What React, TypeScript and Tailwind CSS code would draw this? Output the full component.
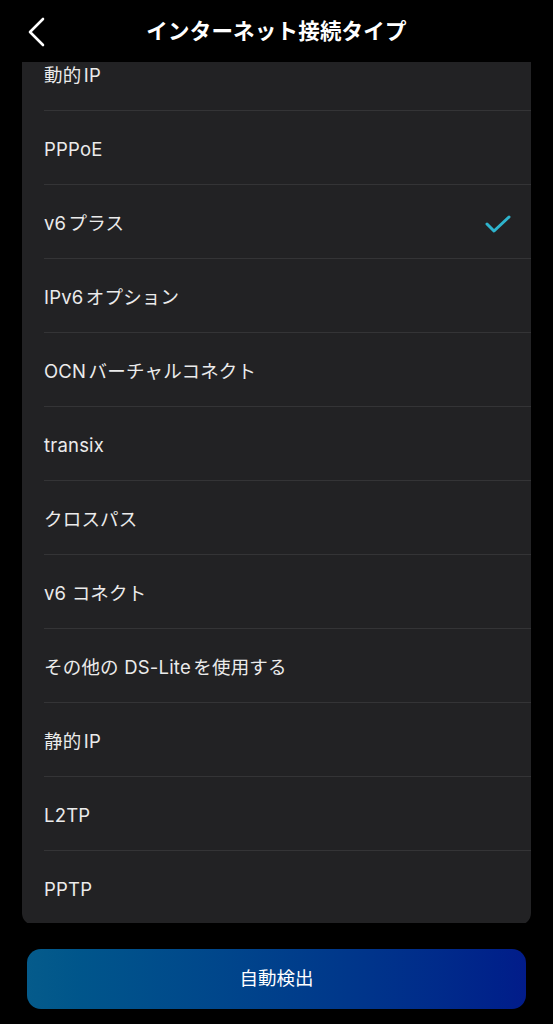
import React from "react";

const items = [
  "動的IP",
  "PPPoE",
  "v6プラス",
  "IPv6オプション",
  "OCNバーチャルコネクト",
  "transix",
  "クロスパス",
  "v6 コネクト",
  "その他の DS-Liteを使用する",
  "静的IP",
  "L2TP",
  "PPTP",
];

const font = { fontFamily: 'Inter, "Noto Sans CJK JP", sans-serif' };

export default function App() {
  return (
    <div className="w-[553px] h-[1024px] bg-black text-white overflow-hidden flex flex-col [text-autospace:normal]" style={font}>
      <div className="h-[62px] shrink-0 relative flex items-center justify-center z-10 bg-black">
        <svg className="absolute left-[27px] top-[17px]" width="20" height="30" viewBox="0 0 20 30" fill="none">
          <path d="M16 2 L3 15 L16 28" stroke="white" strokeWidth="2.6" strokeLinecap="round" strokeLinejoin="round" />
        </svg>
        <h1 className="text-[21.5px] font-bold tracking-[0.2px] text-white">インターネット接続タイプ</h1>
      </div>
      <div className="h-[861px] shrink-0 overflow-hidden px-[22px]">
        <div className="-mt-[25px] bg-[#222224] rounded-[12px] overflow-hidden">
          {items.map((t, i) => (
            <div key={t} className="h-[74px] relative">
              <div className="h-full ml-[22px] pt-[3px] flex items-center justify-between pr-[20px] text-[18.5px] tracking-[0.2px] text-[#ebebeb]">
                <span>{t}</span>
                {t === "v6プラス" && (
                  <svg width="26" height="20" viewBox="0 0 26 20" fill="none">
                    <path d="M2 10 L9 17 L24 3" stroke="#2eb4cd" strokeWidth="3" strokeLinecap="round" strokeLinejoin="round" />
                  </svg>
                )}
              </div>
              {i < items.length - 1 && (
                <div className="absolute bottom-0 left-[22px] right-0 h-px bg-[#343436]" />
              )}
            </div>
          ))}
        </div>
      </div>
      <div className="px-[27px] pt-[26px]">
        <button className="w-full h-[60px] rounded-[14px] bg-gradient-to-r from-[#055b8b] to-[#021c8a] text-white text-[18.5px]">
          自動検出
        </button>
      </div>
    </div>
  );
}
